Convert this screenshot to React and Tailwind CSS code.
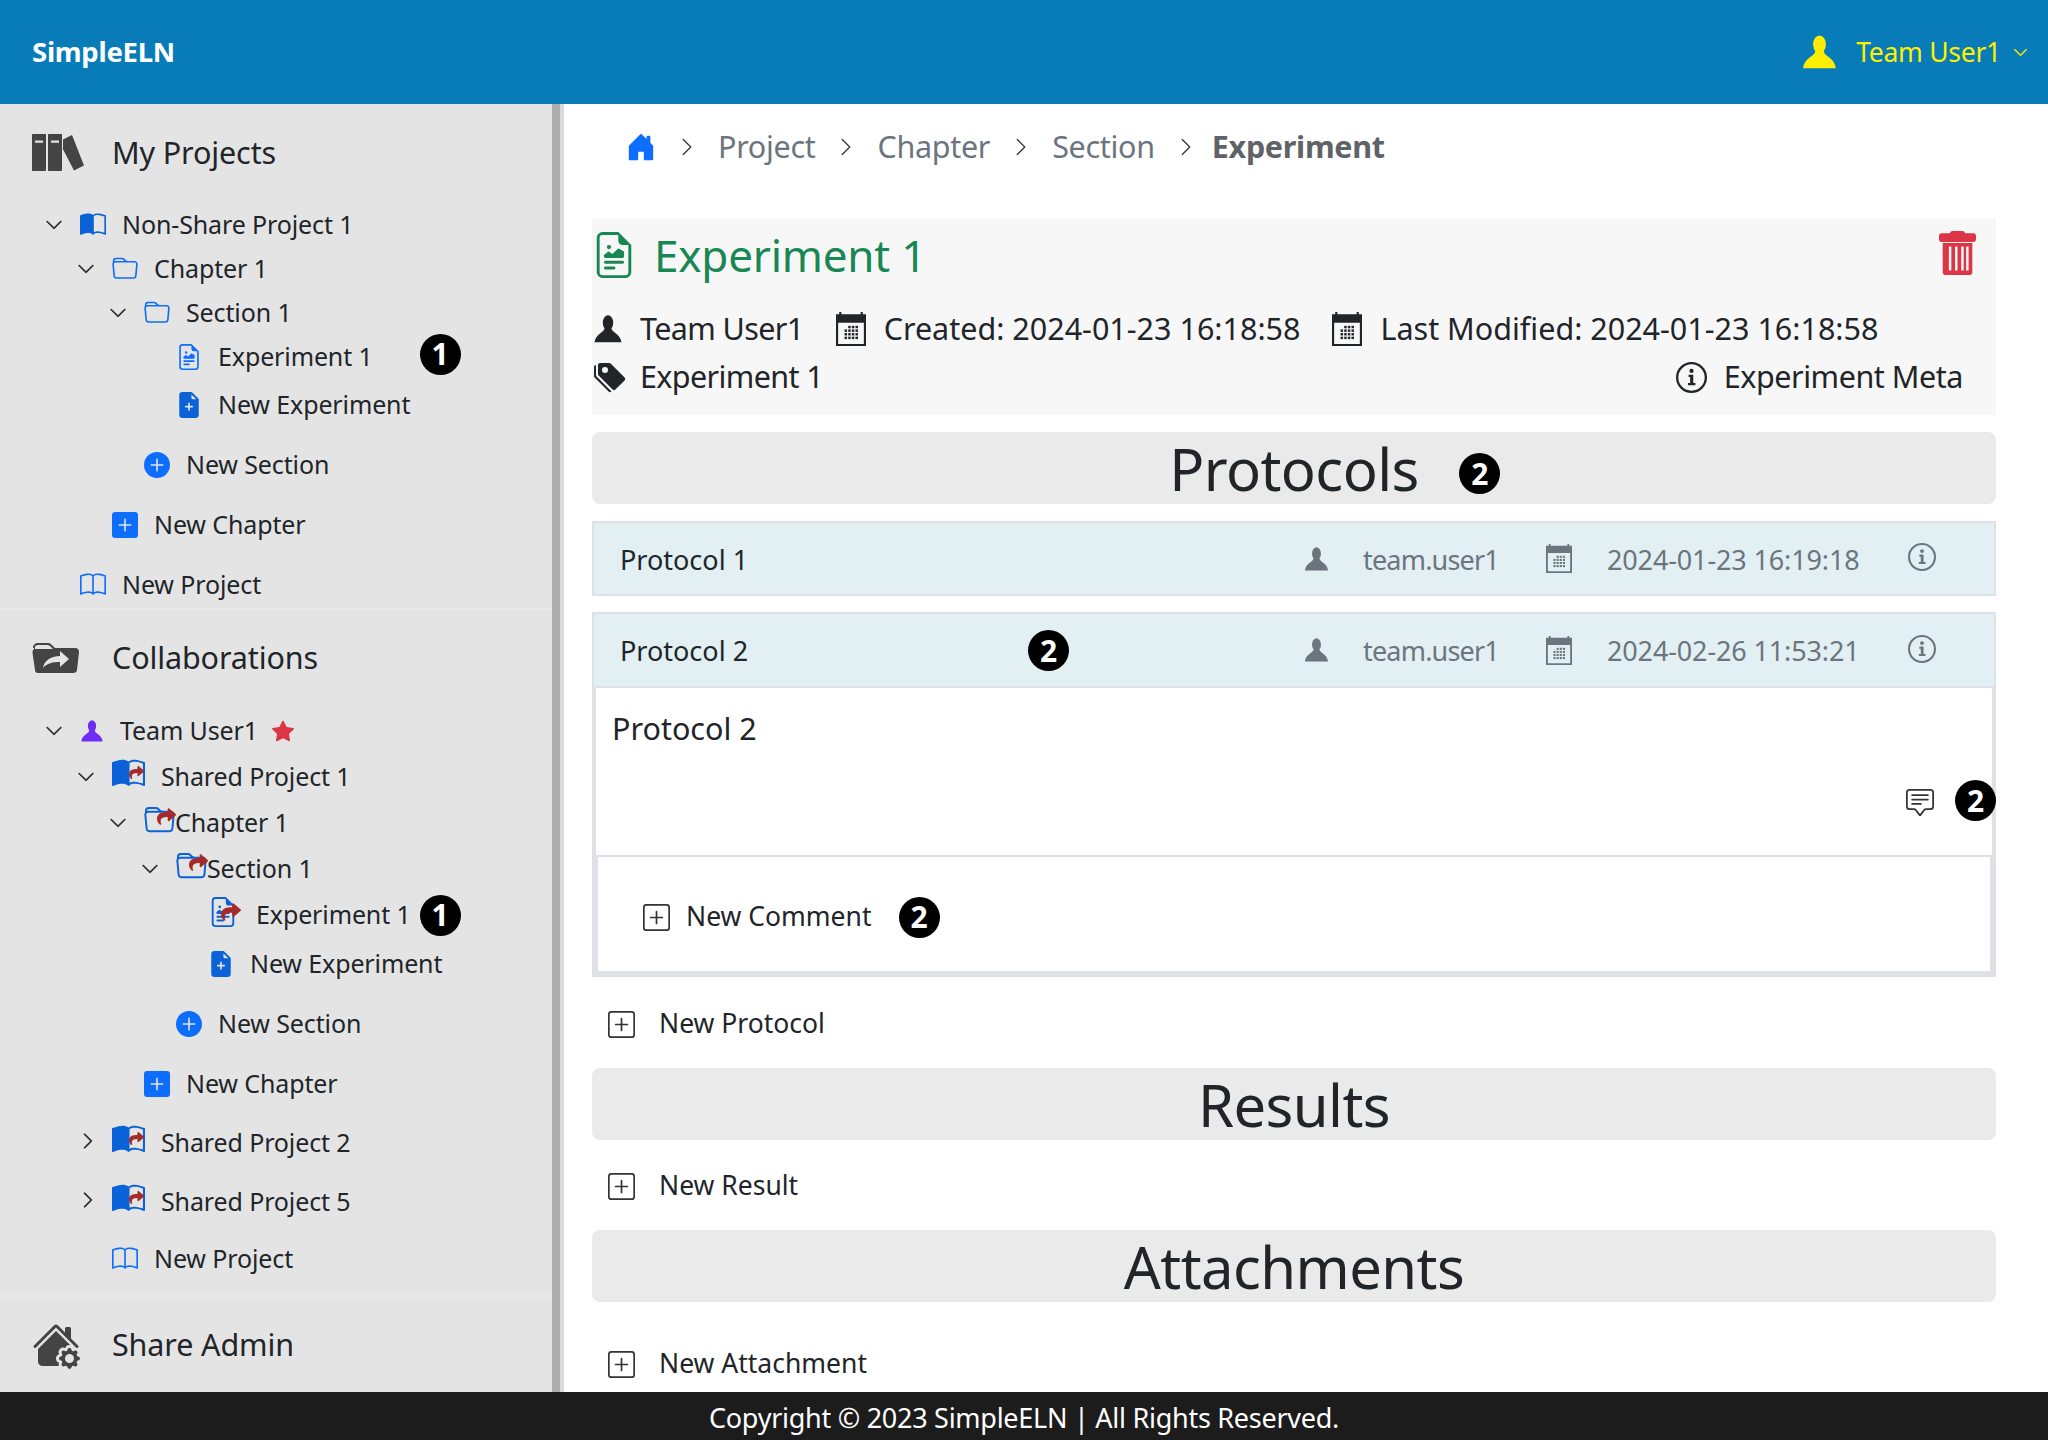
import React from 'react';
import {
  BsBook, BsBookHalf, BsFolder, BsFileEarmarkRichtext, BsFileEarmarkPlusFill, BsPlusCircleFill, BsPlusSquareFill,
  BsChevronDown, BsChevronRight, BsStarFill, BsHouseDoorFill, BsTagsFill,
  BsChatSquareText, BsPlusSquare, BsHouseGearFill,
} from 'react-icons/bs';
import { FaShare } from 'react-icons/fa';

const PersonIcon = ({ className }) => (
  <svg viewBox="0 0 16 16" fill="currentColor" className={className}>
    <ellipse cx="8" cy="4.4" rx="3" ry="4.2" />
    <path d="M6 7.5C6 10 .8 10.6 .3 15.6H15.7C15.2 10.6 10 10 10 7.5Z" />
  </svg>
);

const CalendarIcon = ({ className }) => {
  const dots = [];
  for (let r = 0; r < 4; r++) {
    for (let c = 0; c < 4; c++) {
      if (r === 0 && c === 0) continue;
      dots.push(<rect key={`${r}-${c}`} x={8 + c * 3.4} y={13 + r * 3.4} width="2.3" height="2.3" />);
    }
  }
  return (
    <svg viewBox="0 0 28 32" fill="currentColor" preserveAspectRatio="none" className={className}>
      <path fillRule="evenodd" d="M0 2H3V0H5V2H23V0H25V2H28V32H0ZM2 10V30H26V10Z" />
      {dots}
    </svg>
  );
};

const InfoIcon = ({ className }) => (
  <svg viewBox="0 0 16 16" fill="currentColor" className={className}>
    <path fillRule="evenodd" d="M8 0A8 8 0 1 1 8 16A8 8 0 0 1 8 0ZM8 1.2A6.8 6.8 0 1 0 8 14.8A6.8 6.8 0 0 0 8 1.2Z" />
    <circle cx="8" cy="4.6" r="1.1" />
    <path d="M6.5 6.6H8.9V10.8H10V12H6.2V10.8H7.3V7.8H6.5Z" />
  </svg>
);

const TrashIcon = ({ className }) => (
  <svg viewBox="0 0 30 40" fill="currentColor" preserveAspectRatio="none" className={className}>
    <path d="M11 0H19C20 0 21 .6 21 2H28C29 2 30 3 30 4V8C30 9 29 10 28 10H2C1 10 0 9 0 8V4C0 3 1 2 2 2H9C9 .6 10 0 11 0Z" />
    <path fillRule="evenodd" d="M3 11H27V38C27 39 26 40 25 40H5C4 40 3 39 3 38ZM8 14V36H10V14ZM13 14V36H15V14ZM18 14V36H20V14ZM22 14V36H24V14Z" />
  </svg>
);

const BooksIcon = ({ className }) => (
  <svg viewBox="0 0 52 34" fill="currentColor" preserveAspectRatio="none" className={className}>
    <path fillRule="evenodd" d="M1 0H14V33C14 33.6 13.6 34 13 34H1C.4 34 0 33.6 0 33V1C0 .4 .4 0 1 0ZM3 6V8H11V6Z" />
    <path fillRule="evenodd" d="M17 0H30V33C30 33.6 29.6 34 29 34H17C16.4 34 16 33.6 16 33V1C16 .4 16.4 0 17 0ZM19 6V8H27V6Z" />
    <path d="M31 5L40 1L52 29L42 33.5L31 14Z" />
  </svg>
);

const CollabIcon = ({ className }) => (
  <svg viewBox="0 0 48 30" fill="currentColor" className={className}>
    <path fillRule="evenodd" d="M1 5C1 2 3 0 6 0H16C18 0 19 1 21 3L23 5H43C46 5 47 7 47 9L45 27C45 29 43 30 41 30H6C4 30 3 29 3 27L.5 10C.3 8 1 7 2 6V5ZM3 4V6H21L19 4C18 3 17 2 15 2H6C4 2 3 3 3 4ZM28 8V13C20 13 12 17 11 25C15 20 21 19 28 19V24L37 16Z" />
  </svg>
);

const Badge = ({ n, className = '' }) => (
  <span className={`flex h-[41px] w-[41px] shrink-0 items-center justify-center rounded-full bg-black text-[30px] font-bold leading-none text-white ${className}`}>{n}</span>
);

// blue icon with the red share arrow laid over it
const Shared = ({ children, arrow }) => (
  <span className="relative -mt-[6px] flex items-center">
    {children}
    <FaShare className={`absolute text-[#a52a2a] ${arrow}`} />
  </span>
);

const SharedBook = () => (
  <Shared arrow="right-[1px] top-[7px] text-[15px]">
    <BsBookHalf preserveAspectRatio="none" className="h-[32px] w-[33px] text-[#0a62d6]" />
  </Shared>
);

const SharedFolder = () => (
  <Shared arrow="right-[-1px] top-[2px] text-[19px]">
    <BsFolder className="text-[31px] text-[#0a62d6]" />
  </Shared>
);

const Row = ({ indent, h, caret, icon, label, gap = 'gap-[16px]', children }) => (
  <div className={`flex items-center ${indent} ${h}`}>
    <span className="flex w-[28px] shrink-0 items-center justify-center text-[18px] text-[#212529]">
      {caret === 'down' && <BsChevronDown className="stroke-[0.6]" />}
      {caret === 'right' && <BsChevronRight className="-mt-[5px] ml-[4px] stroke-[0.6]" />}
    </span>
    <div className={`ml-[12px] flex items-center ${gap}`}>
      {icon}
      <span className="whitespace-nowrap">{label}</span>
      {children}
    </div>
  </div>
);

const SideHead = ({ icon, label, h }) => (
  <div className={`flex shrink-0 items-center pl-[32px] text-[30.5px] text-[#212529] ${h}`}>
    <span className="flex w-[80px] shrink-0 items-center">{icon}</span>
    <span>{label}</span>
  </div>
);

const blue = 'text-[#0d6efd]';
const deep = 'text-[#0a62d6]';

const Sidebar = () => (
  <aside className="flex w-[552px] shrink-0 flex-col overflow-hidden bg-[#e4e4e4] text-[25px] tracking-[-0.005em] text-[#212529]">
    <SideHead h="h-[97px]" icon={<BooksIcon className="h-[37px] w-[52px] text-[#444444]" />} label="My Projects" />
    <div className="flex flex-col pt-[2px]">
      <Row indent="pl-[40px]" h="h-[44px]" caret="down" icon={<BsBookHalf className={`text-[26px] ${deep}`} />} label="Non-Share Project 1" />
      <Row indent="pl-[72px]" h="h-[44px]" caret="down" icon={<BsFolder className={`text-[26px] ${blue}`} />} label="Chapter 1" />
      <Row indent="pl-[104px]" h="h-[44px]" caret="down" icon={<BsFolder className={`text-[26px] ${blue}`} />} label="Section 1" />
      <Row indent="pl-[136px]" h="h-[44px]" icon={<BsFileEarmarkRichtext className={`text-[26px] ${blue}`} />} label="Experiment 1">
        <Badge n="1" className="ml-[31px] -mt-[6px]" />
      </Row>
      <Row indent="pl-[136px]" h="h-[52px]" icon={<BsFileEarmarkPlusFill className={`text-[26px] ${deep}`} />} label="New Experiment" />
      <Row indent="pl-[104px]" h="h-[68px]" icon={<BsPlusCircleFill className={`text-[26px] ${blue}`} />} label="New Section" />
      <Row indent="pl-[72px]" h="h-[52px]" icon={<BsPlusSquareFill className={`text-[26px] ${blue}`} />} label="New Chapter" />
      <Row indent="pl-[40px] mt-[11px]" h="h-[46px]" icon={<BsBook className={`text-[26px] ${blue}`} />} label="New Project" />
    </div>
    <div className="h-[2px] shrink-0 bg-[#e9e9e9]" />
    <SideHead h="h-[96px]" icon={<CollabIcon className="h-[38px] w-[48px] text-[#444444]" />} label="Collaborations" />
    <div className="flex flex-col pt-[2px]">
      <Row indent="pl-[40px]" h="h-[46px]" caret="down" icon={<PersonIcon className="h-[22px] w-[24px] text-[#6f2cf5]" />} label="Team User1">
        <BsStarFill className="ml-[-2px] text-[22px] text-[#dc3545]" />
      </Row>
      <Row indent="pl-[72px]" h="h-[46px]" caret="down" icon={<SharedBook />} label="Shared Project 1" />
      <Row indent="pl-[104px]" h="h-[46px]" caret="down" gap="gap-0" icon={<SharedFolder />} label="Chapter 1" />
      <Row indent="pl-[136px]" h="h-[46px]" caret="down" gap="gap-0" icon={<SharedFolder />} label="Section 1" />
      <Row indent="pl-[168px]" h="h-[46px]" gap="gap-[18px]" icon={<Shared arrow="right-[-3px] top-[5px] text-[20px]"><BsFileEarmarkRichtext className={`text-[30px] ${deep}`} /></Shared>} label="Experiment 1">
        <Badge n="1" className="ml-[-9px]" />
      </Row>
      <Row indent="pl-[168px]" h="h-[52px]" icon={<BsFileEarmarkPlusFill className={`text-[26px] ${deep}`} />} label="New Experiment" />
      <Row indent="pl-[136px]" h="h-[68px]" icon={<BsPlusCircleFill className={`text-[26px] ${blue}`} />} label="New Section" />
      <Row indent="pl-[104px]" h="h-[52px]" icon={<BsPlusSquareFill className={`text-[26px] ${blue}`} />} label="New Chapter" />
      <Row indent="pl-[72px]" h="h-[66px]" caret="right" icon={<SharedBook />} label="Shared Project 2" />
      <Row indent="pl-[72px]" h="h-[52px]" caret="right" icon={<SharedBook />} label="Shared Project 5" />
      <Row indent="pl-[72px] mb-[5px]" h="h-[62px]" icon={<BsBook className={`text-[26px] ${blue}`} />} label="New Project" />
    </div>
    <div className="h-[2px] shrink-0 bg-[#e9e9e9]" />
    <SideHead h="h-[96px]" icon={<BsHouseGearFill className="text-[48px] text-[#444444]" />} label="Share Admin" />
  </aside>
);

const Crumb = ({ children }) => (
  <>
    <BsChevronRight className="text-[20px] text-[#333333]" />
    {children}
  </>
);

const SectionBar = ({ title, children }) => (
  <div className="relative flex h-[72px] shrink-0 items-center justify-center rounded-[8px] bg-[#eaeaea] text-[58px] tracking-[-0.01em] text-[#212529]">
    {title}
    {children}
  </div>
);

const NewLine = ({ label, h }) => (
  <div className={`flex shrink-0 items-center gap-[24px] pl-[16px] text-[26.5px] text-[#212529] ${h}`}>
    <BsPlusSquare className="text-[27px] text-[#333333]" />
    <span>{label}</span>
  </div>
);

const ProtocolHead = ({ name, date, h = 'h-[75px]', children }) => (
  <div className={`relative flex items-center border-2 border-[#dee2e6] bg-[#e2f0f4] pl-[26px] text-[27px] ${h}`}>
    <span className="mt-[3px] text-[#212529]">{name}</span>
    {children}
    <div className="ml-auto flex items-center text-[#6c757d]">
      <PersonIcon className="h-[24px] w-[25px]" />
      <span className="ml-[34px] mt-[3px] w-[183px] tracking-[-0.03em]">team.user1</span>
      <CalendarIcon className="h-[29px] w-[26px]" />
      <span className="ml-[35px] mt-[3px] w-[301px] whitespace-nowrap tracking-[-0.005em]">{date}</span>
      <InfoIcon className="mb-[3px] mr-[58px] h-[28px] w-[28px]" />
    </div>
  </div>
);

const Main = () => (
  <main className="flex min-w-0 flex-1 flex-col overflow-hidden bg-white pl-[28px] pr-[52px] text-[#212529]">
    <nav className="flex h-[114px] shrink-0 items-center gap-[21px] pb-[28px] pl-[34px] text-[30.5px] tracking-[-0.01em] text-[#6c757d]">
      <BsHouseDoorFill className="text-[30px] text-[#0d6efd]" />
      <Crumb>Project</Crumb>
      <Crumb>Chapter</Crumb>
      <Crumb>Section</Crumb>
      <Crumb><b className="-ml-[5px] font-bold text-[#5f6368]">Experiment</b></Crumb>
    </nav>
    <section className="flex h-[197px] shrink-0 flex-col bg-[#f7f7f7] pl-[2px] pr-[4px] text-[30.5px]">
      <div className="flex h-[74px] items-center pr-[16px]">
        <BsFileEarmarkRichtext className="-ml-[3px] text-[46px] text-[#198754]" />
        <span className="ml-[17px] text-[44px] tracking-[-0.005em] text-[#198754]">Experiment 1</span>
        <TrashIcon className="ml-auto mb-[4px] h-[44px] w-[37px] text-[#dc3545]" />
      </div>
      <div className="mt-[10px] flex h-[54px] items-center">
        <PersonIcon className="h-[28px] w-[28px] text-[#212529]" />
        <span className="ml-[18px] tracking-[-0.02em]">Team User1</span>
        <CalendarIcon className="ml-[32px] h-[34px] w-[30px] text-[#212529]" />
        <span className="ml-[18px]">Created: 2024-01-23 16:18:58</span>
        <CalendarIcon className="ml-[32px] h-[34px] w-[30px] text-[#212529]" />
        <span className="ml-[18px]">Last Modified: 2024-01-23 16:18:58</span>
      </div>
      <div className="flex h-[42px] items-center pr-[29px]">
        <BsTagsFill className="text-[32px] text-[#212529]" />
        <span className="ml-[14px] tracking-[-0.02em]">Experiment 1</span>
        <InfoIcon className="ml-auto h-[31px] w-[31px]" />
        <span className="ml-[17px] tracking-[-0.015em]">Experiment Meta</span>
      </div>
    </section>
    <div className="mt-[17px] shrink-0">
      <SectionBar title="Protocols">
        <Badge n="2" className="absolute left-[867px] top-[21px]" />
      </SectionBar>
    </div>
    <div className="mt-[17px] shrink-0">
      <ProtocolHead name="Protocol 1" date="2024-01-23 16:19:18" />
    </div>
    <div className="mt-[16px] shrink-0 border-x-[4px] border-b-[6px] border-[#dee2e6]">
      <div className="-mx-[4px]">
        <ProtocolHead name="Protocol 2" date="2024-02-26 11:53:21" h="h-[76px]">
          <Badge n="2" className="absolute left-[434px] top-[16px]" />
        </ProtocolHead>
      </div>
      <div className="relative h-[169px] border-b-2 border-[#dee2e6] pl-[16px] pt-[18px] text-[30.5px]">
        Protocol 2
        <BsChatSquareText className="absolute right-[58px] top-[101px] text-[28px] text-[#333333]" />
        <Badge n="2" className="absolute right-[-4px] top-[92px]" />
      </div>
      <div className="flex h-[114px] items-center gap-[16px] border-x-2 border-[#dee2e6] pl-[45px] pt-[6px] text-[26.5px]">
        <BsPlusSquare className="text-[27px] text-[#333333]" />
        <span>New Comment</span>
        <Badge n="2" className="ml-[11px]" />
      </div>
    </div>
    <NewLine label="New Protocol" h="h-[91px] pt-[3px]" />
    <SectionBar title="Results" />
    <NewLine label="New Result" h="h-[90px] pt-[2px]" />
    <SectionBar title="Attachments" />
    <NewLine label="New Attachment" h="h-[89px] pt-[35px]" />
  </main>
);

export default function App() {
  return (
    <div className="flex h-[1440px] w-[2048px] flex-col overflow-hidden bg-white font-['Noto_Sans',sans-serif]">
      <header className="flex h-[104px] shrink-0 items-center justify-between bg-[#087cb9] pl-[32px] pr-[20px]">
        <span className="text-[27.5px] font-bold tracking-[-0.01em] text-white">SimpleELN</span>
        <div className="flex items-center text-[26.5px] tracking-[-0.01em] text-[#ffee00]">
          <PersonIcon className="h-[34px] w-[37px]" />
          <span className="ml-[18px] mt-[2px]">Team User1</span>
          <BsChevronDown className="ml-[12px] text-[15px] stroke-[0.6]" />
        </div>
      </header>
      <div className="flex min-h-0 flex-1">
        <Sidebar />
        <div className="w-[8px] shrink-0 bg-[#adadad]" />
        <div className="w-[4px] shrink-0 bg-[#d9d9d9]" />
        <Main />
      </div>
      <footer className="flex h-[48px] shrink-0 items-center justify-center bg-[#1c1c1c] pt-[4px] text-[27px] tracking-[-0.01em] text-white">
        Copyright © 2023 SimpleELN | All Rights Reserved.
      </footer>
    </div>
  );
}
